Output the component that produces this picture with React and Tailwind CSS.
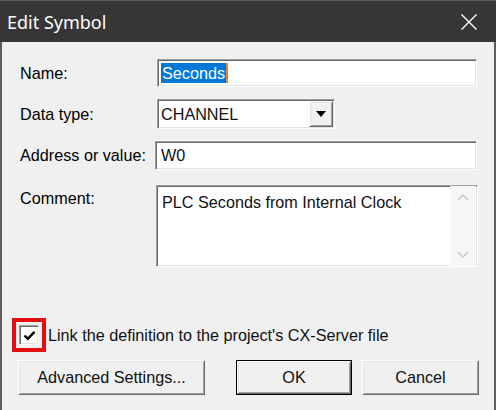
import React from "react";

const sunken =
  "bg-white border border-t-[#a0a0a0] border-l-[#a0a0a0] border-b-white border-r-white shadow-[inset_1px_1px_0_#696969,inset_-1px_-1px_0_#e3e3e3]";
const raised =
  "bg-[#f0f0f0] border border-t-white border-l-white border-b-[#696969] border-r-[#696969] shadow-[inset_1px_1px_0_#e3e3e3,inset_-1px_-1px_0_#a0a0a0]";

function Label({ children, top }) {
  return (
    <div className={`w-[137px] shrink-0 text-black ${top ? "pt-[5px]" : ""}`}>{children}</div>
  );
}

export default function App() {
  return (
    <div
      className="w-[496px] h-[410px] flex flex-col overflow-hidden text-[16.2px] leading-none text-[#111]"
      style={{ fontFamily: '"Liberation Sans", Arial, sans-serif' }}
    >
      {/* Title bar */}
      <div className="h-[42px] shrink-0 bg-[#363636] border-t border-[#5a5a5a] flex items-center justify-between pl-[7px] pr-[18px]">
        <span
          className="text-white text-[18px] leading-none"
          style={{ fontFamily: '"Noto Sans", "Open Sans", sans-serif' }}
        >
          Edit Symbol
        </span>
        <svg width="18" height="18" viewBox="0 0 18 18">
          <path d="M1.5 1.5 L16.5 16.5 M16.5 1.5 L1.5 16.5" stroke="#ffffff" strokeWidth="1.4" />
        </svg>
      </div>

      {/* Body */}
      <div className="flex-1 bg-[#f0f0f0] border-l-2 border-r-2 border-[#5e5e5e] flex flex-col pl-[18px] pt-[17px]">
        {/* Name */}
        <div className="flex items-center h-[28px]">
          <Label>Name:</Label>
          <div className={`w-[320px] h-[28px] ${sunken} flex items-center pl-[3px]`}>
            <span className="bg-[#0078d7] text-white h-[20px] px-[1px] flex items-center">Seconds</span>
            <span className="w-[2px] h-[20px] bg-[#f08020]" />
          </div>
        </div>

        {/* Data type */}
        <div className="flex items-center h-[30px] mt-[12px]">
          <Label>Data type:</Label>
          <div className={`w-[178px] h-[30px] ${sunken} flex items-center`}>
            <span className="flex-1 pl-[3px]">CHANNEL</span>
            <div className={`w-[24px] h-[26px] mr-[1px] ${raised} flex items-center justify-center`}>
              <svg width="10" height="6" viewBox="0 0 10 6">
                <path d="M0 0 H10 L5 6 Z" fill="#000" />
              </svg>
            </div>
          </div>
        </div>

        {/* Address */}
        <div className="flex items-center h-[29px] mt-[12px]">
          <Label>Address or value:</Label>
          <div className={`w-[322px] -ml-[2px] h-[29px] ${sunken} flex items-center pl-[5px]`}>
            W0
          </div>
        </div>

        {/* Comment */}
        <div className="flex items-start mt-[15px]">
          <Label top>Comment:</Label>
          <div className={`w-[322px] -ml-[1px] h-[82px] ${sunken} flex`}>
            <div className="flex-1 pl-[5px] pt-[8px]">PLC Seconds from Internal Clock</div>
            <div className="w-[26px] h-full bg-[#f6f6f6] flex flex-col items-center justify-between py-[8px] mr-[1px]">
              <svg width="12" height="7" viewBox="0 0 12 7">
                <path d="M1 6 L6 1 L11 6" stroke="#c4c4c4" strokeWidth="1.4" fill="none" />
              </svg>
              <svg width="12" height="7" viewBox="0 0 12 7">
                <path d="M1 1 L6 6 L11 1" stroke="#c4c4c4" strokeWidth="1.4" fill="none" />
              </svg>
            </div>
          </div>
        </div>

        {/* Checkbox */}
        <div className="flex items-center mt-[51px] -ml-[8px]">
          <div className="w-[34px] h-[34px] border-[4px] border-[#e41010] flex items-center justify-center">
            <div className={`w-[20px] h-[20px] ${sunken} flex items-center justify-center`}>
              <svg width="13" height="11" viewBox="0 0 13 11">
                <path d="M1.5 5.5 L4.8 8.8 L11.5 1.8" stroke="#000" strokeWidth="2.4" fill="none" />
              </svg>
            </div>
          </div>
          <span className="ml-[2px]">Link the definition to the project's CX-Server file</span>
        </div>

        {/* Buttons */}
        <div className="flex mt-[8px] h-[35px] -ml-[2px]">
          <div className={`w-[187px] h-[35px] ${raised} flex items-center justify-center`}>
            Advanced Settings...
          </div>
          <div className="w-[116px] h-[35px] ml-[31px] border border-black flex">
            <div className={`flex-1 ${raised} flex items-center justify-center`}>OK</div>
          </div>
          <div className={`w-[117px] h-[35px] ml-[10px] ${raised} flex items-center justify-center`}>
            Cancel
          </div>
        </div>
      </div>
    </div>
  );
}
